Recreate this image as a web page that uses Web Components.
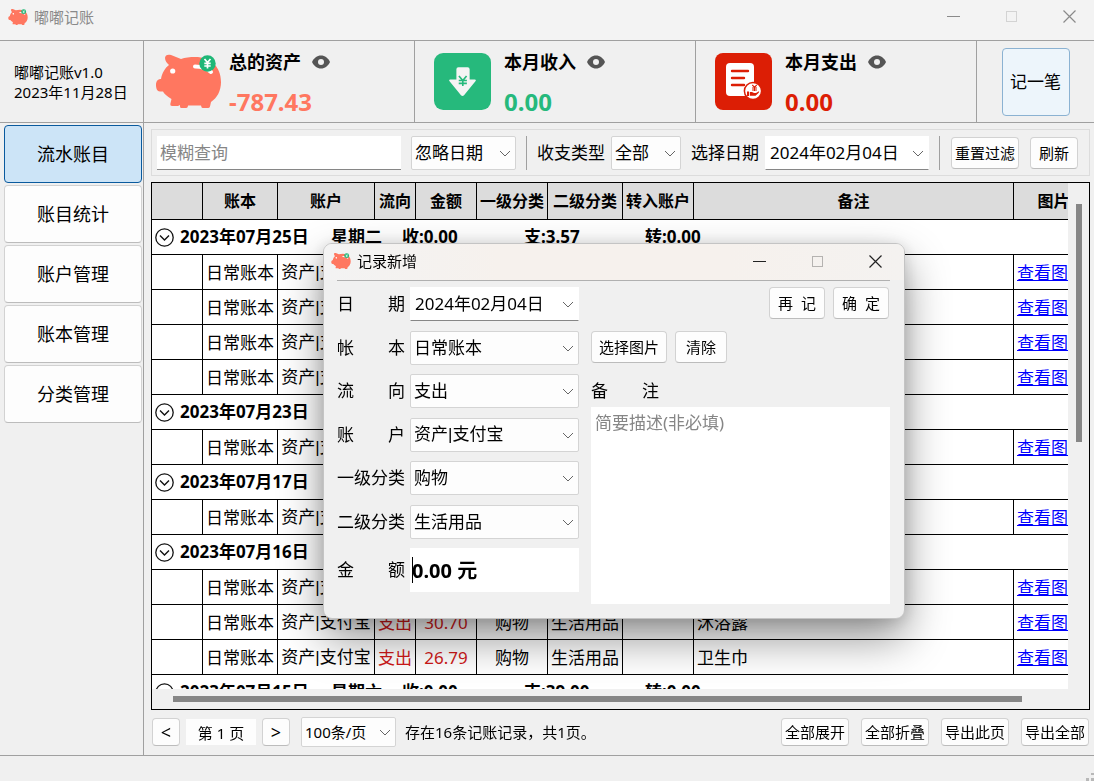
<!DOCTYPE html>
<html lang="zh-CN">
<head>
<meta charset="utf-8">
<meta name="viewport" content="width=device-width, initial-scale=1">
<title>嘟嘟记账</title>
<style>
  body {
    margin: 0;
    background: #f0f0f0;
    color: #000;
    font-family: "Noto Sans", "Noto Sans CJK SC", sans-serif;
    font-size: 17px;
    line-height: 24px;
  }
</style>
</head>
<body>
<ledger-app></ledger-app>

<script>
const ICONS = {
  pig: ['0 0 67 57', `
    <path fill="#ff7760" d="M10 5C10 2 13 1 16 2L26 6C30 4.500 35 4 40 4C56 4 66 14 66 29C66 38 62 45 56 49L55 53.500Q54.500 55 53 55H48Q46.500 55 46.300 53.500L46 52.500H33L32.700 54Q32.300 55 31 55H26.500Q25 55 25 53.500V52L23 53H17Q15 53 15.300 51L16.500 46C12 43 9 41 8 38.500H5C2 38.500 1 35 1 32C1 28 3 26 6 26C7 20 10 15 14 12C12 10 10 8 10 5Z"/>
    <circle cx="17.700" cy="18" r="2.600" fill="#fff"/>
    <path d="M40 13.500Q50 13.500 56 19" fill="none" stroke="#fff" stroke-width="4" stroke-linecap="round"/>
    <circle cx="52.500" cy="10.500" r="8.200" fill="#1fb777"/>
    <path d="M49.500 6L52.500 9.500L55.500 6M52.500 9.500V15.500M49.300 10.300H55.700M49.300 13H55.700" fill="none" stroke="#fff" stroke-width="1.700"/>`],
  income: ['0 0 56 56', `
    <rect width="56" height="56" rx="9" fill="#26b97c"/>
    <path fill="#f4f4f4" d="M22 16Q22 14 24 14H33Q35 14 35 16V26H40Q42 26 40.500 28L29.500 41.500Q28 43 26.500 41.500L15.500 28Q14 26 16 26H22Z"/>
    <path d="M24.500 22.500L28.300 27L32 22.500M28.300 27V32.500M24.300 27H32.300M24.300 29.800H32.300" fill="none" stroke="#26b97c" stroke-width="1.600"/>`],
  expense: ['0 0 57 57', `
    <rect width="57" height="57" rx="8" fill="#dc1e05"/>
    <rect x="11" y="10" width="28" height="33" rx="4" fill="#fff"/>
    <path d="M17 18H33M17 25H29M17 32H29" stroke="#dc1e05" stroke-width="2.400" stroke-linecap="round"/>
    <circle cx="38" cy="38" r="8.600" fill="#fff" stroke="#dc1e05" stroke-width="1.500"/>
    <path d="M37.300 32L39.500 34.300L41.700 32M39.500 34.300V38M37 35H42M37 37H42" fill="none" stroke="#dc1e05" stroke-width="1.100"/>
    <path d="M32 38.500H34V43H32ZM34.800 39H37L39 40H41L44 38.200Q44.500 39 43.500 40L40.500 42.700H34.800Z" fill="#dc1e05"/>`],
  eye: ['0 0 18 14', `
    <path fill="#555" d="M0 7C2 3 5 0.500 9 0.500S16 3 18 7C16 11 13 13.500 9 13.500S2 11 0 7Z"/>
    <circle cx="9" cy="7" r="3" fill="#f0f0f0"/>`],
  chevron: ['0 0 12 12', `<path d="M1 4L6 9L11 4" fill="none" stroke="#666"/>`],
  fold: ['0 0 19 19', `<circle cx="9.500" cy="9.500" r="8.700" fill="none" stroke="#111" stroke-width="1.300"/><path d="M5 7.500L9.500 12L14 7.500" fill="none" stroke="#111" stroke-width="1.400"/>`],
  min: ['0 0 13 13', `<path d="M0 6.500H13" stroke="currentColor"/>`],
  max: ['0 0 13 13', `<rect x="1.500" y="1.500" width="10" height="10" fill="none" stroke="currentColor" opacity=".3"/>`],
  close: ['0 0 13 13', `<path d="M0.500 0.500L12.500 12.500M12.500 0.500L0.500 12.500" stroke="currentColor" stroke-width="1.200"/>`],
  grip: ['0 0 8 8', `<path d="M5 0H8V2H5ZM5 5H8V8H5ZM0 5H3V8H0Z" fill="#b8b8b8"/>`]
};

const define = (tag, render) => customElements.define(tag, class extends HTMLElement {
  connectedCallback() {
    if (this.shadowRoot) return;
    const box = document.createElement('template');
    box.innerHTML = render(this);
    this.attachShadow({ mode: 'open' }).append(box.content.cloneNode(true));
  }
});

define('app-icon', el => {
  const [view, shape] = ICONS[el.getAttribute('name')];
  return `<style>:host{display:block;flex:none}svg{display:block;width:100%;height:100%}</style>
  <svg viewBox="${view}" aria-hidden="true">${shape}</svg>`;
});

define('push-button', el => `
<style>
  :host { display: block; flex: none; height: 32px; }
  button {
    box-sizing: border-box; width: 100%; height: 100%; padding: 0;
    font: inherit; font-size: var(--text, 15px); line-height: 20px; color: #000; white-space: pre;
    background: #fdfdfd; border: 1px solid #d2d2d2; border-bottom-color: #bcbcbc; border-radius: 4px;
  }
  :host([tone="current"]) button { background: #cce4f7; border-color: #0a5a9e; }
  :host([tone="hover"]) button { background: #edf5fb; border-color: #8bb2d2; }
</style>
<button type="button"><slot></slot></button>`);

define('drop-down', el => {
  const label = el.getAttribute('label');
  return `
<style>
  :host { display: flex; flex: none; align-items: center; gap: var(--space, 6px); }
  label { white-space: pre; flex: none; width: 68px; }
  .box { display: grid; align-items: center; width: var(--box, 100px); height: var(--tall, 34px); }
  select, app-icon { grid-area: 1 / 1; }
  select {
    appearance: none; box-sizing: border-box; width: 100%; height: 100%; margin: 0; padding: 0 20px 0 3px;
    font: inherit; font-size: var(--text, 17px); color: #000; text-overflow: clip;
    background: #fdfdfd; border: 1px solid #d4d4d4; border-radius: 2px;
  }
  :host([kind="date"]) select { background: #fff; border-color: #fff #fff #868686; border-radius: 0; padding-left: 4px; }
  :host([kind="account"]) select { font-family: "Liberation Sans", "Noto Sans CJK SC", sans-serif; }
  app-icon { justify-self: end; width: 12px; height: 12px; margin-right: 5px; pointer-events: none; }
</style>
${label ? `<label for="s">${label}</label>` : ''}
<div class="box">
  <select id="s" ${label ? '' : `aria-label="${el.getAttribute('hint')}"`}><option>${el.getAttribute('value')}</option></select>
  <app-icon name="chevron"></app-icon>
</div>`;
});

define('window-bar', el => `
<style>
  :host { display: flex; align-items: center; flex: none; box-sizing: border-box; font-size: 15px; line-height: 20px; }
  .pig { width: 20px; height: 18px; margin-right: 6px; }
  .title { flex: 1; }
  button { display: grid; place-items: center; width: 50px; height: 32px; margin-left: 8px; padding: 0; border: 0; background: none; color: var(--mark, #222); }
  button app-icon { width: 13px; height: 13px; }
</style>
<app-icon class="pig" name="pig"></app-icon>
<span class="title"><slot></slot></span>
<button type="button" aria-label="最小化"><app-icon name="min"></app-icon></button>
<button type="button" aria-label="最大化" disabled><app-icon name="max"></app-icon></button>
<button type="button" aria-label="关闭"><app-icon name="close"></app-icon></button>`);

define('stat-card', el => `
<style>
  :host { display: flex; align-items: center; box-sizing: border-box; gap: 13px; padding-left: 19px; border-right: 1px solid #a0a0a0; }
  :host([wide]) { gap: 7px; padding-left: 11px; }
  .pic { width: 57px; height: 57px; }
  :host([wide]) .pic { width: 67px; }
  .info { display: grid; gap: 12px; padding-top: 4px; }
  .name { display: flex; align-items: center; gap: 11px; font-size: 18px; font-weight: 700; line-height: 24px; }
  .name app-icon { width: 18px; height: 14px; }
  .sum { font-size: 24px; font-weight: 700; line-height: 32px; color: var(--sum); }
</style>
<app-icon class="pic" name="${el.getAttribute('icon')}"></app-icon>
<div class="info">
  <div class="name"><slot></slot><app-icon name="eye"></app-icon></div>
  <div class="sum">${el.getAttribute('sum')}</div>
</div>`);

define('side-menu', el => `
<style>
  :host { display: block; box-sizing: border-box; padding: 2px 1px 0 4px; --text: 18px; }
  nav { display: grid; gap: 2px; }
  push-button { height: 58px; }
</style>
<nav>
  <push-button tone="current">流水账目</push-button>
  <push-button>账目统计</push-button>
  <push-button>账户管理</push-button>
  <push-button>账本管理</push-button>
  <push-button>分类管理</push-button>
</nav>`);

define('filter-bar', el => `
<style>
  :host { display: flex; align-items: center; gap: 10px; box-sizing: border-box; height: 47px; flex: none; padding: 0 11px 0 5px; border: 1px solid #dcdcdc; }
  input {
    flex: 1; min-width: 80px; box-sizing: border-box; height: 34px; padding: 0 3px; margin: 0;
    font: inherit; background: #fff; border: 0; border-bottom: 1px solid #868686;
  }
  input::placeholder { color: #868686; opacity: 1; }
  i { width: 1px; height: 34px; background: #a0a0a0; }
  .reset { width: 68px; margin-left: 1px; }
  .fresh { width: 48px; margin-left: 1px; }
</style>
<input type="text" placeholder="模糊查询" aria-label="模糊查询">
<drop-down hint="日期过滤" value="忽略日期" style="--box:105px"></drop-down>
<i></i>
<drop-down label="收支类型" value="全部" style="--box:70px"></drop-down>
<drop-down kind="date" label="选择日期" value="2024年02月04日" style="--box:164px"></drop-down>
<i></i>
<push-button class="reset">重置过滤</push-button>
<push-button class="fresh">刷新</push-button>`);

const GROUPS = [
  { date: '2023年07月25日', day: '星期二', sums: ['收:0.00', '支:3.57', '转:0.00'], rows: [{}, {}, {}, {}] },
  { date: '2023年07月23日', day: '', sums: [], rows: [{}] },
  { date: '2023年07月17日', day: '', sums: [], rows: [{}] },
  { date: '2023年07月16日', day: '', sums: [], rows: [{},
    { flow: '支出', sum: '30.70', first: '购物', second: '生活用品', note: '沐浴露' },
    { flow: '支出', sum: '26.79', first: '购物', second: '生活用品', note: '卫生巾' }] },
  { date: '2023年07月15日', day: '星期六', sums: ['收:0.00', '支:39.00', '转:0.00'], rows: [] }
];

define('ledger-table', el => `
<style>
  :host {
    display: grid; grid-template: minmax(0, 1fr) 20px / minmax(0, 1fr) 21px;
    box-sizing: border-box; border: 1px solid #000; background: #f0f0f0;
  }
  .view { overflow: auto; scrollbar-width: none; background: #fff; }
  table { table-layout: fixed; width: 942px; border-collapse: separate; border-spacing: 0; }
  th, td { box-sizing: border-box; height: 35px; padding: 0; border: solid #000; border-width: 0 1px 1px 0; text-align: center; white-space: nowrap; overflow: hidden; }
  th { height: 37px; background: #dcdcdc; font-size: 16px; font-weight: 700; }
  td { padding-top: 2px; }
  td.account { font-family: "Liberation Sans", "Noto Sans CJK SC", sans-serif; }
  td.note, td.link { text-align: left; padding-left: 3px; }
  td.out { color: #d01818; }
  td.band { padding: 0 0 0 3px; font-weight: 700; }
  .line { display: grid; grid-template-columns: 25px 151px 71px 122px 121px 1fr; align-items: center; text-align: left; }
  .line app-icon { width: 19px; height: 19px; }
  a { color: #00f; text-decoration: underline; }
  .down, .across { display: flex; }
  .down { justify-content: center; padding-top: 21px; }
  .down i { width: 6px; height: 49%; background: #868686; }
  .across { padding: 7px 46px 0 21px; }
  .across i { flex: 1; height: 6px; background: #868686; }
</style>
<div class="view">
  <table>
    <colgroup>${[51, 75, 97, 41, 61, 71, 75, 71, 320, 80].map(w => `<col style="width:${w}px">`).join('')}</colgroup>
    <thead><tr><th></th>${['账本', '账户', '流向', '金额', '一级分类', '二级分类', '转入账户', '备注', '图片'].map(t => `<th scope="col">${t}</th>`).join('')}</tr></thead>
    <tbody>${GROUPS.map(g => `
      <tr><td class="band" colspan="10"><div class="line"><app-icon name="fold"></app-icon><span>${g.date}</span><span>${g.day}</span>${g.sums.map(s => `<span>${s}</span>`).join('')}</div></td></tr>
      ${g.rows.map(r => `<tr><td></td><td>日常账本</td><td class="account">资产|支付宝</td><td class="out">${r.flow || ''}</td><td class="out">${r.sum || ''}</td><td>${r.first || ''}</td><td>${r.second || ''}</td><td></td><td class="note">${r.note || ''}</td><td class="link"><a href="#">查看图片</a></td></tr>`).join('')}`).join('')}
    </tbody>
  </table>
</div>
<div class="down"><i></i></div>
<div class="across"><i></i></div>`);

define('pager-bar', el => `
<style>
  :host { display: flex; align-items: center; flex: none; height: 30px; padding: 0 1px; font-size: 15px; }
  push-button { width: 68px; height: 28px; margin-left: 12px; }
  .step { width: 28px; margin: 0; --text: 18px; }
  input { width: 70px; height: 26px; box-sizing: border-box; margin: 0 6px; padding: 0; border: 0; background: #fdfdfd; font: inherit; text-align: center; }
  drop-down { --box: 95px; --tall: 30px; --text: 15px; margin: 0 9px 0 11px; }
  p { flex: 1; margin: 0; white-space: nowrap; }
</style>
<push-button class="step">&lt;</push-button>
<input type="text" value="第 1 页" aria-label="页码">
<push-button class="step">&gt;</push-button>
<drop-down hint="每页条数" value="100条/页"></drop-down>
<p>存在16条记账记录，共1页。</p>
<push-button>全部展开</push-button>
<push-button>全部折叠</push-button>
<push-button>导出此页</push-button>
<push-button>导出全部</push-button>`);

define('record-dialog', el => `
<style>
  :host {
    display: flex; flex-direction: column; box-sizing: border-box; width: 582px; padding: 0 14px 14px 13px;
    background: #f0f0f0; border: 1px solid #c4c4c4; border-radius: 9px; overflow: hidden;
    box-shadow: 0 20px 44px rgba(0, 0, 0, .42), 0 2px 16px rgba(0, 0, 0, .14);
  }
  window-bar { height: 36px; margin: 0 -14px 0 -13px; padding: 0 4px 2px 7px; background: linear-gradient(90deg, #f3f3f3, #f6f1ed 30% 70%, #f4f2f0); }
  .body { display: flex; gap: 12px; padding-top: 6px; border-top: 1px solid #b0b0b0; }
  .left { display: flex; flex-direction: column; justify-content: space-between; flex: none; height: 305px; --box: 169px; --space: 5px; }
  .money { display: flex; align-items: center; gap: 5px; position: relative; }
  .money label { width: 68px; white-space: pre; }
  .money input { box-sizing: border-box; width: 169px; height: 44px; margin: 0; padding: 0 0 2px 2px; border: 0; background: #fff; font: inherit; font-size: 20px; font-weight: 700; }
  .caret { position: absolute; left: 75px; top: 9px; width: 1px; height: 26px; background: #000; }
  .right { flex: 1; display: flex; flex-direction: column; height: 317px; }
  .row { display: flex; gap: 8px; height: 44px; flex: none; align-items: flex-start; }
  .end { justify-content: flex-end; padding-right: 1px; }
  .right label { white-space: pre; height: 32px; line-height: 32px; }
  textarea { flex: 1; box-sizing: border-box; width: 100%; margin: 0; padding: 4px; border: 0; background: #fff; font: inherit; resize: none; }
  textarea::placeholder { color: #868686; opacity: 1; }
</style>
<window-bar>记录新增</window-bar>
<div class="body">
  <div class="left">
    <drop-down kind="date" label="日　　期" value="2024年02月04日"></drop-down>
    <drop-down label="帐　　本" value="日常账本"></drop-down>
    <drop-down label="流　　向" value="支出"></drop-down>
    <drop-down kind="account" label="账　　户" value="资产|支付宝"></drop-down>
    <drop-down label="一级分类" value="购物"></drop-down>
    <drop-down label="二级分类" value="生活用品"></drop-down>
    <div class="money"><label for="sum">金　　额</label><input id="sum" type="text" value="0.00 元"><span class="caret"></span></div>
  </div>
  <div class="right">
    <div class="row end"><push-button style="width:56px">再  记</push-button><push-button style="width:56px">确  定</push-button></div>
    <div class="row"><push-button style="width:76px">选择图片</push-button><push-button style="width:52px">清除</push-button></div>
    <label for="note">备　　注</label>
    <textarea id="note" placeholder="简要描述(非必填)"></textarea>
  </div>
</div>`);

define('ledger-app', el => `
<style>
  :host { display: flex; flex-direction: column; height: 100vh; min-height: 480px; position: relative; overflow: hidden; }
  .bar { height: 40px; padding: 0 0 7px 8px; background: #f3f3f3; color: #8a8a8a; --mark: #8a8a8a; }
  header { display: grid; grid-template-columns: 144px 271fr 281fr 281fr 117fr; height: 81px; flex: none; border: solid #a0a0a0; border-width: 1px 0; }
  .brand { display: grid; align-content: center; box-sizing: border-box; padding-left: 14px; border-right: 1px solid #a0a0a0; font-size: 15px; line-height: 20px; }
  .add { display: grid; place-items: center; --text: 17px; }
  .add push-button { width: 68px; height: 68px; }
  main { flex: 1; min-height: 0; display: grid; grid-template-columns: 144px minmax(0, 1fr); border-bottom: 1px solid #a0a0a0; }
  side-menu { border-right: 1px solid #a0a0a0; }
  .work { display: flex; flex-direction: column; min-height: 0; padding: 6px 4px 8px 7px; }
  ledger-table { flex: 1; min-height: 0; margin: 6px 0 7px; }
  footer { height: 25px; flex: none; display: flex; align-items: flex-end; justify-content: flex-end; }
  footer app-icon { width: 8px; height: 8px; }
  record-dialog { position: absolute; left: 323px; top: 243px; }
</style>
<window-bar class="bar">嘟嘟记账</window-bar>
<header>
  <div class="brand"><span>嘟嘟记账v1.0</span><span>2023年11月28日</span></div>
  <stat-card wide icon="pig" sum="-787.43" style="--sum:#ff7760">总的资产</stat-card>
  <stat-card icon="income" sum="0.00" style="--sum:#26b97c">本月收入</stat-card>
  <stat-card icon="expense" sum="0.00" style="--sum:#dc1e05">本月支出</stat-card>
  <div class="add"><push-button tone="hover">记一笔</push-button></div>
</header>
<main>
  <side-menu></side-menu>
  <div class="work">
    <filter-bar></filter-bar>
    <ledger-table></ledger-table>
    <pager-bar></pager-bar>
  </div>
</main>
<footer><app-icon name="grip"></app-icon></footer>
<record-dialog role="dialog" aria-label="记录新增"></record-dialog>`);
</script>
</body>
</html>
